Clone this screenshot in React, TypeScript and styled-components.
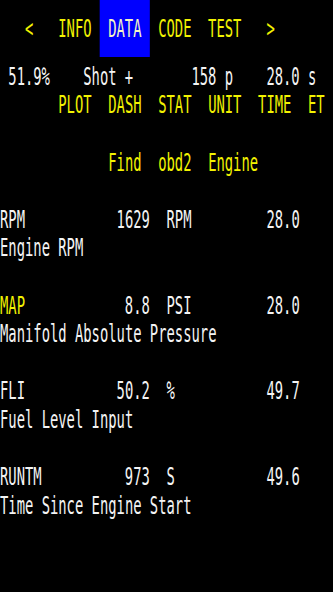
import React from "react";
import styled, { createGlobalStyle } from "styled-components";

const GlobalStyle = createGlobalStyle`
  html, body {
    margin: 0;
    padding: 0;
    background: #000;
    overflow: hidden;
  }
`;

const YELLOW = "#f2f200";
const WHITE = "#f4f4f4";

const Frame = styled.div`
  width: 333px;
  height: 592px;
  overflow: hidden;
  background: #000;
`;

/* Terminal-like screen: 40 monospace columns squeezed horizontally to 333px */
const Screen = styled.div`
  font-family: "DejaVu Sans Mono", "Liberation Mono", monospace;
  font-size: 24px;
  width: 40ch;
  height: 592px;
  color: ${WHITE};
  transform: scaleX(0.5762);
  transform-origin: 0 0;
  white-space: pre;
`;

const TabBar = styled.nav`
  display: grid;
  grid-template-columns: repeat(6, 6ch);
  height: 57.2px;
  color: ${YELLOW};
`;

const Tab = styled.span<{ $active?: boolean }>`
  box-sizing: border-box;
  height: 57.2px;
  padding-top: 2px;
  line-height: 55.2px;
  text-align: center;
  background: ${(p) => (p.$active ? "#0000ff" : "transparent")};
  color: ${(p) => (p.$active ? "#f6f6c4" : YELLOW)};
`;

const Arrow = styled(Tab)<{ $indent: number }>`
  text-align: left;
  padding-left: ${(p) => p.$indent}ch;
`;

const Body = styled.main`
  padding-top: 5.6px;
`;

const Line = styled.div`
  height: 28.6px;
  line-height: 28.6px;
`;

const StatusLine = styled(Line)`
  display: grid;
  grid-template-columns: 1ch 9ch 13ch 9ch auto;
`;

const ButtonRow = styled(Line)<{ $indent: number }>`
  display: grid;
  grid-auto-flow: column;
  grid-auto-columns: 6ch;
  justify-content: start;
  padding-left: ${(p) => p.$indent}ch;
  color: ${YELLOW};
`;

const DataRow = styled(Line)`
  display: grid;
  grid-template-columns: 10ch 8ch 14ch auto;
`;

const Name = styled.span<{ $selected?: boolean }>`
  color: ${(p) => (p.$selected ? YELLOW : WHITE)};
`;

const Value = styled.span`
  text-align: right;
`;

const Unit = styled.span`
  padding-left: 2ch;
`;

const Description = styled(Line)``;

const Spacer = styled(Line)``;

type Pid = {
  name: string;
  value: string;
  unit: string;
  avg: string;
  desc: string;
  selected?: boolean;
};

const pids: Pid[] = [
  { name: "RPM", value: "1629", unit: "RPM", avg: "28.0", desc: "Engine RPM" },
  { name: "MAP", value: "8.8", unit: "PSI", avg: "28.0", desc: "Manifold Absolute Pressure", selected: true },
  { name: "FLI", value: "50.2", unit: "%", avg: "49.7", desc: "Fuel Level Input" },
  { name: "RUNTM", value: "973", unit: "S", avg: "49.6", desc: "Time Since Engine Start" },
];

export default function App() {
  return (
    <>
      <GlobalStyle />
      <Frame>
        <Screen>
          <TabBar>
            <Arrow $indent={3}>&lt;</Arrow>
            <Tab>INFO</Tab>
            <Tab $active>DATA</Tab>
            <Tab>CODE</Tab>
            <Tab>TEST</Tab>
            <Arrow $indent={2}>&gt;</Arrow>
          </TabBar>
          <Body>
            <StatusLine>
              <span />
              <span>51.9%</span>
              <span>Shot +</span>
              <span>158 p</span>
              <span>28.0 s</span>
            </StatusLine>
            <ButtonRow $indent={7}>
              <span>PLOT</span>
              <span>DASH</span>
              <span>STAT</span>
              <span>UNIT</span>
              <span>TIME</span>
              <span>ET</span>
            </ButtonRow>
            <Spacer />
            <ButtonRow $indent={13}>
              <span>Find</span>
              <span>obd2</span>
              <span>Engine</span>
            </ButtonRow>
            {pids.map((p) => (
              <React.Fragment key={p.name}>
                <Spacer />
                <DataRow>
                  <Name $selected={p.selected}>{p.name}</Name>
                  <Value>{p.value}</Value>
                  <Unit>{p.unit}</Unit>
                  <span>{p.avg}</span>
                </DataRow>
                <Description>{p.desc}</Description>
              </React.Fragment>
            ))}
          </Body>
        </Screen>
      </Frame>
    </>
  );
}
